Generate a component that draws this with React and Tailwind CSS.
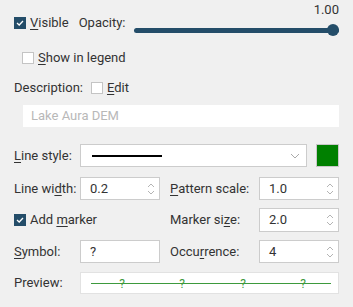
import React from "react";

function CheckBox({ checked }) {
  return checked ? (
    <div className="w-[12px] h-[12px] bg-[#244d69] flex items-center justify-center shrink-0">
      <svg width="8" height="6" viewBox="0 0 8 6">
        <path d="M1 3 L3.2 5 L7 1" stroke="#fff" strokeWidth="1.3" fill="none" />
      </svg>
    </div>
  ) : (
    <div className="w-[12px] h-[12px] bg-white border border-[#c4c4c4] shrink-0" />
  );
}

function Mn({ children }) {
  return <span className="underline underline-offset-2">{children}</span>;
}

function Spin({ value }) {
  return (
    <div className="w-[80px] h-full bg-white border border-[#cccccc] flex items-center pl-[9px] pr-[4px]">
      <span className="flex-1">{value}</span>
      <svg width="8" height="14" viewBox="0 0 8 14">
        <path d="M1 5 L4 2 L7 5" stroke="#b4b4b4" strokeWidth="1" fill="none" />
        <path d="M1 9 L4 12 L7 9" stroke="#b4b4b4" strokeWidth="1" fill="none" />
      </svg>
    </div>
  );
}

export default function App() {
  const marks = [122, 182, 243, 303];
  return (
    <div
      className="w-[353px] h-[307px] bg-[#f0f0f0] text-[#333] text-[13px] overflow-hidden"
      style={{ fontFamily: "Roboto, 'Liberation Sans', sans-serif" }}
    >
      {/* visible + opacity */}
      <div className="flex h-[40px] pl-[14px] pr-[14px]">
        <div className="flex items-center h-[12px] mt-[17px]">
          <CheckBox checked />
          <span className="ml-[4px]"><Mn>V</Mn>isible</span>
          <span className="ml-[10px]">Opacity:</span>
        </div>
        <div className="flex-1 ml-[8px] flex flex-col">
          <span className="self-end mt-[3px] leading-[14px]">1.00</span>
          <div className="relative mt-[11px] h-[5px] rounded-full bg-[#244d69]">
            <div className="absolute right-0 top-[-4px] w-[12px] h-[12px] rounded-full bg-[#244d69]" />
          </div>
        </div>
      </div>

      {/* show in legend */}
      <div className="flex items-center h-[21px] mt-[7px] pl-[22px]">
        <CheckBox />
        <span className="ml-[4px]"><Mn>S</Mn>how in legend</span>
      </div>

      {/* description */}
      <div className="flex items-center h-[21px] mt-[9px] pl-[14px]">
        <span>Description:</span>
        <span className="ml-[8px]"><CheckBox /></span>
        <span className="ml-[4px]"><Mn>E</Mn>dit</span>
      </div>
      <div className="ml-[23px] w-[316px] h-[22px] mt-[7px] bg-white flex items-center pl-[8px] text-[#b8b8b8]">
        Lake Aura DEM
      </div>

      {/* line style */}
      <div className="flex items-center h-[23px] mt-[17px] pl-[14px]">
        <span className="w-[66px]"><Mn>L</Mn>ine style:</span>
        <div className="w-[227px] h-full bg-white border border-[#cccccc] flex items-center pl-[11px] pr-[6px]">
          <div className="w-[70px] h-[2px] bg-black" />
          <div className="flex-1" />
          <svg width="10" height="6" viewBox="0 0 10 6">
            <path d="M1 1 L5 5 L9 1" stroke="#aaaaaa" strokeWidth="1" fill="none" />
          </svg>
        </div>
        <div className="ml-[9px] w-[23px] h-[23px] bg-[#008000] border border-[#c8c8c8]" />
      </div>

      {/* line width / pattern scale */}
      <div className="flex items-center h-[23px] mt-[10px] pl-[14px]">
        <span className="w-[66px]">Line wi<Mn>d</Mn>th:</span>
        <Spin value="0.2" />
        <span className="w-[99px] pl-[10px] whitespace-nowrap"><Mn>P</Mn>attern scale:</span>
        <Spin value="1.0" />
      </div>

      {/* add marker / marker size */}
      <div className="flex items-center h-[24px] mt-[8px] pl-[14px]">
        <div className="w-[156px] flex items-center">
          <CheckBox checked />
          <span className="ml-[4px]">Add <Mn>m</Mn>arker</span>
        </div>
        <span className="w-[89px] whitespace-nowrap">Marker si<Mn>z</Mn>e:</span>
        <Spin value="2.0" />
      </div>

      {/* symbol / occurrence */}
      <div className="flex items-center h-[23px] mt-[8px] pl-[14px]">
        <span className="w-[66px]"><Mn>S</Mn>ymbol:</span>
        <div className="w-[80px] h-full bg-white border border-[#cccccc] flex items-center pl-[9px]">?</div>
        <span className="w-[99px] pl-[10px] whitespace-nowrap">Occu<Mn>r</Mn>rence:</span>
        <Spin value="4" />
      </div>

      {/* preview */}
      <div className="flex items-center h-[22px] mt-[9px] pl-[14px]">
        <span className="w-[66px]">Preview:</span>
        <div className="w-[259px] h-full bg-white border border-[#e2e2e2]">
          <svg width="257" height="20" viewBox="0 0 257 20">
            <line x1="10" y1="10.5" x2="250" y2="10.5" stroke="#3d9a3d" strokeWidth="1" />
            {marks.map((m) => (
              <text
                key={m}
                x={m - 81}
                y="15"
                fontSize="12"
                fill="#3d9a3d"
                textAnchor="middle"
                fontFamily="Roboto, sans-serif"
              >
                ?
              </text>
            ))}
          </svg>
        </div>
      </div>
    </div>
  );
}
